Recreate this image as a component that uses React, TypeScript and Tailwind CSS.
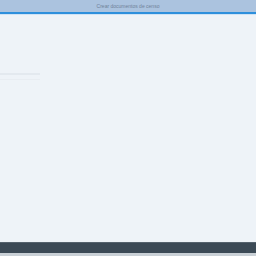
export default function App() {
  return (
    <div
      className="flex h-[256px] w-[256px] flex-col bg-[#eef3f8]"
      style={{ fontFamily: '"Liberation Sans", Arial, sans-serif' }}
    >
      {/* Title bar */}
      <header className="flex h-[12px] items-center justify-center bg-[#abc3df]">
        <span className="text-[5px] leading-none text-[#6f8299]">Crear documentos de censo</span>
      </header>
      <div className="h-[2px] bg-[#2d8fdc]" />
      <div className="h-[1px] bg-[#cfe3f5]" />

      {/* Content */}
      <main className="flex-1 pt-[58px]">
        <div className="h-[2px] w-[40px] bg-[#e3e9ef]" />
        <div className="mt-[4px] h-[1px] w-[40px] bg-[#e8edf2]" />
      </main>

      {/* Footer */}
      <footer className="h-[11px] border-t border-[#56636e] bg-[#3c4a56]" />
      <div className="h-[3px] bg-[#c9d0d6]" />
    </div>
  );
}
